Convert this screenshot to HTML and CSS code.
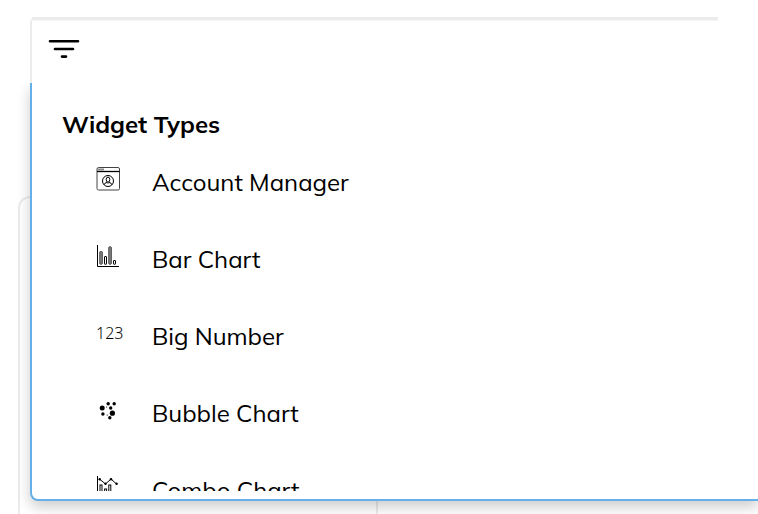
FILE: index.html
```html
<!DOCTYPE html>
<html lang="en">
<head>
<meta charset="utf-8">
<meta name="viewport" content="width=device-width, initial-scale=1">
<title>Widget Types</title>
<link rel="stylesheet" href="styles.css">
</head>
<body>
<main class="board">
  <section class="card"></section>
</main>
<div class="picker">
  <header class="toolbar">
    <button class="filter" type="button" aria-label="Filter">
      <svg width="32" height="20" viewBox="0 0 32 20" fill="none" stroke="#000" stroke-width="2.6" stroke-linecap="round"><path d="M2 2.3H30M7 10H25M14 17.6H18"/></svg>
    </button>
  </header>
  <section class="dropdown">
    <h2 class="title">Widget Types</h2>
    <ul class="list">
      <li><button class="row" type="button">
        <svg class="icon" viewBox="0 0 28 28" fill="none" stroke="#444" stroke-width="1"><rect x="1" y="2.5" width="22.5" height="22.5" rx="1.5"/><path d="M1 6.5H23.5" stroke="#000" stroke-width="1.3"/><path d="M2 4.5H8" stroke="#888" stroke-width="2"/><g stroke="#000"><circle cx="12" cy="16" r="5.5"/><ellipse cx="12" cy="14.6" rx="1.8" ry="2.5"/><path d="M8 19.7Q8.4 18 11 17.4L12 18.4L13 17.4Q15.6 18 16 19.7"/></g></svg>
        <span>Account Manager</span></button></li>
      <li><button class="row" type="button">
        <svg class="icon" viewBox="0 0 28 28" fill="none" stroke="#000" stroke-width="1"><path d="M1.5 3V24.5H23"/><g stroke-width="1"><rect x="3.8" y="9.5" width="2.5" height="12.7" rx=".7" fill="#888" stroke="#444"/><rect x="8.5" y="14.5" width="2" height="7.7" rx=".4"/><rect x="12.8" y="4.8" width="2.5" height="17.4" rx=".7" fill="#888" stroke="#444"/><rect x="17.5" y="18.5" width="2" height="3.7" rx=".4"/></g></svg>
        <span>Bar Chart</span></button></li>
      <li><button class="row" type="button">
        <span class="icon digits">123</span>
        <span>Big Number</span></button></li>
      <li><button class="row" type="button">
        <svg class="icon" viewBox="0 0 28 28"><circle cx="12.2" cy="7.8" r="1.7"/><circle cx="18.2" cy="7.8" r="1.7"/><circle cx="6.2" cy="12" r="2.5"/><circle cx="10.6" cy="11" r=".6"/><circle cx="14.7" cy="12" r="1.7"/><circle cx="6.9" cy="18" r="1.7"/><circle cx="11.2" cy="19" r=".6"/><circle cx="16.4" cy="17.2" r="2.6"/><circle cx="13.8" cy="21.7" r="1.7"/></svg>
        <span>Bubble Chart</span></button></li>
      <li><button class="row" type="button">
        <svg class="icon" viewBox="0 0 28 28" fill="none" stroke="#000" stroke-width="1"><path d="M1.5 3V26.5H23"/><path d="M3.5 6L9.5 11L15 6L20.5 11"/><g fill="#000" stroke="none"><circle cx="3.7" cy="6.2" r="1.2"/><circle cx="9.5" cy="10.7" r="1.2"/><circle cx="15" cy="6.2" r="1.2"/><circle cx="20.6" cy="10.8" r="1.2"/></g><rect x="4" y="12" width="2" height="12"/><rect x="8.6" y="16" width="2" height="8"/><rect x="12.8" y="12" width="2" height="12"/></svg>
        <span>Combo Chart</span></button></li>
    </ul>
  </section>
</div>
</body>
</html>
```
FILE: styles.css
```css
*, *::before { box-sizing: border-box; }
body {
  margin: 0;
  min-height: 100vh;
  overflow: hidden;
  background: #fff;
  color: #000;
  font-family: Mulish, Muli, Nunito, Lato, sans-serif;
}
.board {
  display: grid;
  grid-template-columns: 360px 1fr;
  height: 100vh;
  padding: 196px 0 0 18px;
}
.card {
  border: 2px solid #ebebeb;
  border-bottom: 0;
  border-radius: 12px 0 0 0;
}
.picker {
  position: absolute;
  top: 17px;
  left: 30px;
  right: 0;
}
.toolbar {
  position: relative;
  height: 66px;
  padding: 22px 16px;
  border-left: 2px solid #ebebeb;
  border-radius: 6px 0 0 0;
  background: #fff;
}
.toolbar::before {
  content: "";
  position: absolute;
  top: 0;
  left: 0;
  right: 40px;
  height: 4px;
  border-top: 3px solid #ebebeb;
  border-bottom: 1px solid #f6f6f6;
}
.filter {
  display: block;
  padding: 0;
  border: 0;
  background: none;
}
.filter svg { display: block; }
.dropdown {
  padding: 25px 0 8px 30px;
  border: 2px solid #65b0e8;
  border-top: 0;
  border-right: 0;
  border-radius: 0 0 0 8px;
  background: #fff;
  box-shadow: 0 6px 14px rgba(0, 0, 0, .2);
  clip-path: inset(0 0 -30px -30px);
}
.title {
  margin: 0;
  font-size: 24px;
  line-height: 32px;
  font-weight: 700;
}
.list {
  height: calc(100vh - 168px);
  margin: 5px 0 0;
  padding: 0;
  overflow: hidden;
  list-style: none;
}
.row {
  display: flex;
  align-items: center;
  gap: 28px;
  width: 100%;
  height: 77px;
  padding: 0 0 4px 34px;
  border: 0;
  background: none;
  color: inherit;
  font: 24px/32px Mulish, Muli, Nunito, Lato, sans-serif;
  text-align: left;
}
.icon {
  flex: none;
  width: 28px;
  height: 28px;
  margin-bottom: 6px;
}
.digits {
  font: 300 16px/28px "Noto Sans", sans-serif;
}
```
